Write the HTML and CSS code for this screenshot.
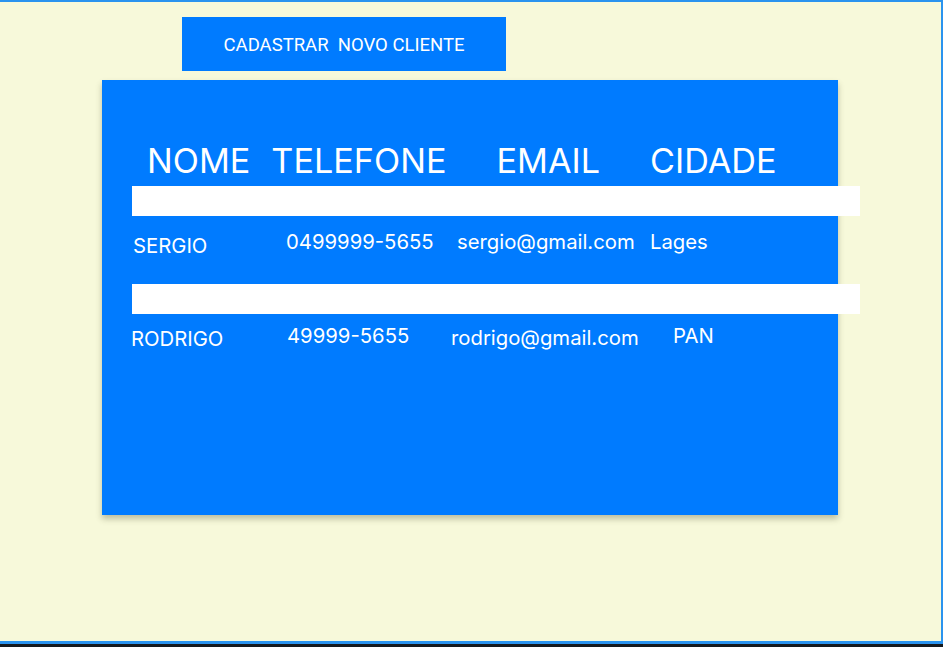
FILE: index.html
```html
<!DOCTYPE html>
<html lang="pt">
<head>
<meta charset="utf-8">
<title>Clientes</title>
<link rel="stylesheet" href="styles.css">
</head>
<body>
<div class="frame">
  <button class="btn-new">CADASTRAR  NOVO CLIENTE</button>
  <section class="panel">
    <div class="head">
      <span class="h-nome">NOME</span>
      <span class="h-tel">TELEFONE</span>
      <span class="h-email">EMAIL</span>
      <span class="h-cid">CIDADE</span>
    </div>
    <div class="bar bar-1"></div>
    <div class="row row-1">
      <span class="c-nome">SERGIO</span>
      <span class="c-tel">0499999-5655</span>
      <span class="c-email">sergio@gmail.com</span>
      <span class="c-cid">Lages</span>
    </div>
    <div class="bar bar-2"></div>
    <div class="row row-2">
      <span class="c-nome">RODRIGO</span>
      <span class="c-tel">49999-5655</span>
      <span class="c-email">rodrigo@gmail.com</span>
      <span class="c-cid">PAN</span>
    </div>
  </section>
</div>
</body>
</html>
```
FILE: styles.css
```css
html {
  background: #15191d;
}
body {
  margin: 0;
  font-family: Inter, "Noto Sans", sans-serif;
}
.frame {
  box-sizing: border-box;
  width: 943px;
  height: 644px;
  background: #f7f9da;
  border-top: 2px solid #2a93ee;
  border-right: 2px solid #2a93ee;
  border-bottom: 3px solid #2a93ee;
  padding-top: 15px;
  display: flex;
  flex-direction: column;
}
.btn-new {
  margin-left: 182px;
  width: 324px;
  height: 54px;
  border: none;
  background: #007bff;
  color: #fff;
  font-family: Roboto, sans-serif;
  font-size: 18.5px;
  white-space: pre;
  padding: 2px 0 0;
}
.panel {
  margin-top: 9px;
  margin-left: 102px;
  width: 736px;
  height: 435px;
  box-sizing: border-box;
  background: #007bff;
  box-shadow: 0 4px 6px rgba(60, 60, 30, 0.3);
  padding-top: 61px;
  color: #fff;
}
.head {
  display: flex;
  font-size: 34.2px;
  line-height: 40px;
  padding-left: 45px;
}
.h-tel { margin-left: 21px; }
.h-email { margin-left: 50px; }
.h-cid { margin-left: 50px; }
.bar {
  background: #fff;
  margin-left: 30px;
  width: 728px;
  height: 30px;
}
.bar-1 { margin-top: 5px; }
.bar-2 { margin-top: 26px; }
.row {
  display: flex;
  font-size: 20.3px;
  line-height: 24px;
  align-items: flex-start;
}
.row span { display: block; }
.row-1 { margin-top: 14px; }
.row-1 .c-nome { margin-left: 31px; width: 153px; margin-top: 4px; }
.row-1 .c-tel { width: 171px; }
.row-1 .c-email { width: 193px; }
.row-2 { margin-top: 10px; }
.row-2 .c-nome { margin-left: 29px; width: 156px; margin-top: 3px; }
.row-2 .c-tel { width: 164px; }
.row-2 .c-email { width: 222px; margin-top: 2px; }
```
